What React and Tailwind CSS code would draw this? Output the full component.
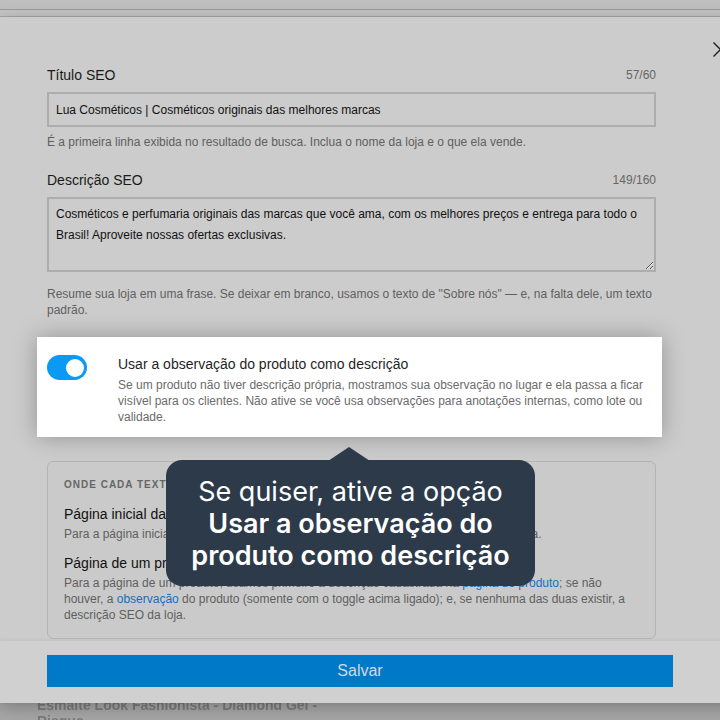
import { X } from 'lucide-react';

const sans = { fontFamily: '"Liberation Sans", Arial, sans-serif' };

function Field({ label, count, children, hint }) {
  return (
    <div>
      <div className="flex h-5 items-center justify-between">
        <span className="text-[14px] text-[#1a1a1a]">{label}</span>
        <span className="text-[12px] text-[#666]">{count}</span>
      </div>
      {children}
      {hint}
    </div>
  );
}

function Toggle() {
  return (
    <div className="mt-px flex h-[25px] w-10 shrink-0 items-center justify-end rounded-full bg-[#0b9af3] pr-[3px]">
      <span className="size-[18px] rounded-full bg-white" />
    </div>
  );
}

export default function App() {
  return (
    <div className="relative h-[720px] w-[720px] overflow-hidden bg-[#a6a6a6]" style={sans}>
      {/* store page behind the dialog */}
      <div className="h-[10px] border-b border-[#999] bg-[#bfbfbf]" />
      <div className="h-[6px] bg-[#c4c4c4]" />
      <div className="pl-[37px] pt-[681px] text-[14px] font-bold leading-4 text-[#7a7a7a] blur-[0.6px]">
        <p>Esmalte Look Fashionista - Diamond Gel -</p>
        <p>Risque</p>
      </div>

      {/* SEO dialog */}
      <div className="absolute left-0 top-[17px] flex h-[686px] w-[760px] flex-col bg-[#cccccc] shadow-[0_4px_16px_rgba(0,0,0,0.25)]">
        <button className="absolute left-[713px] top-[25px] text-[#1e1e1e]">
          <svg width="15" height="15" viewBox="0 0 15 15" fill="none" stroke="currentColor" strokeWidth="1.4">
            <path d="M0.5 0.5l14 14M14.5 0.5l-14 14" />
          </svg>
        </button>

        <div className="relative h-[624px] pl-[47px] pt-[48px]">
          <div className="w-[609px]">
            <Field
              label="Título SEO"
              count="57/60"
              hint={
                <p className="mt-[7px] text-[12px] leading-4 text-[#5f5f5f]">
                  É a primeira linha exibida no resultado de busca. Inclua o nome da loja e o que ela vende.
                </p>
              }
            >
              <div className="mt-[7px] flex h-[35px] items-center border-2 border-[#adadad] px-[7px] text-[12px] text-[#111]">
                Lua Cosméticos | Cosméticos originais das melhores marcas
              </div>
            </Field>

            <div className="mt-5">
              <Field
                label="Descrição SEO"
                count="149/160"
                hint={
                  <p className="mt-[14px] text-[12px] leading-4 text-[#5f5f5f]">
                    Resume sua loja em uma frase. Se deixar em branco, usamos o texto de "Sobre nós" — e, na falta
                    dele, um texto padrão.
                  </p>
                }
              >
                <textarea
                  readOnly
                  className="mt-[7px] block h-[75px] w-full border-2 border-[#adadad] bg-transparent px-[7px] pt-[5px] text-[12px] leading-[21px] text-[#111] outline-none"
                  defaultValue="Cosméticos e perfumaria originais das marcas que você ama, com os melhores preços e entrega para todo o Brasil! Aproveite nossas ofertas exclusivas."
                />
              </Field>
            </div>
          </div>

          {/* highlighted option */}
          <div className="relative z-10 -ml-[10px] mt-[19px] flex h-[100px] w-[625px] gap-[31px] bg-white pl-[10px] pr-[14px] pt-[17px] shadow-[0_0_22px_rgba(0,0,0,0.28)]">
            <Toggle />
            <div>
              <p className="text-[14px] leading-5 text-[#1f1f1f]">Usar a observação do produto como descrição</p>
              <p className="mt-[3px] text-[12px] leading-4 text-[#6b6b6b]">
                Se um produto não tiver descrição própria, mostramos sua observação no lugar e ela passa a ficar
                visível para os clientes. Não ative se você usa observações para anotações internas, como lote ou
                validade.
              </p>
            </div>
          </div>

          {/* where each text appears */}
          <div className="mt-6 h-[178px] w-[609px] rounded-md border border-[#b4b4b4] bg-[#cacaca] px-4 pt-4">
            <p className="text-[10px] font-bold uppercase leading-[14px] tracking-[1px] text-[#666]">
              Onde cada texto aparece
            </p>
            <p className="mt-3 text-[14px] leading-5 text-[#111]">Página inicial da loja</p>
            <p className="mt-[2px] text-[12px] leading-4 text-[#5f5f5f]">
              Para a página inicial, usamos a Descrição SEO acima ou, se vazia, o texto da plataforma.
            </p>
            <p className="mt-[11px] text-[14px] leading-5 text-[#111]">Página de um produto</p>
            <p className="mt-[2px] text-[12px] leading-4 text-[#5f5f5f]">
              Para a página de um produto, usamos primeiro a descrição cadastrada na{' '}
              <span className="text-[#1170c0]">página do produto</span>; se não houver, a{' '}
              <span className="text-[#1170c0]">observação</span> do produto (somente com o toggle acima ligado); e, se
              nenhuma das duas existir, a descrição SEO da loja.
            </p>
          </div>

          {/* coach mark */}
          <div
            className="absolute left-[166px] top-[443px] z-20 w-[369px] rounded-2xl bg-[#2d3a4a] pb-[14px] pt-4 text-center text-[27px] leading-8 text-white"
            style={{ fontFamily: 'Inter, "Noto Sans", sans-serif' }}
          >
            <svg className="absolute -top-[13px] left-[162px]" width="42" height="14" viewBox="0 0 42 14">
              <path d="M0 14 L21 0 L42 14 Z" fill="#2d3a4a" />
            </svg>
            <p>Se quiser, ative a opção</p>
            <p className="font-semibold">
              Usar a observação do
              <br />
              produto como descrição
            </p>
          </div>
        </div>

        <div className="h-[62px] bg-[#d0d0d0] pl-[47px] pt-[14px] shadow-[0_-1px_4px_rgba(0,0,0,0.06)]">
          <button className="h-8 w-[626px] bg-[#0079c9] text-[16px] text-[#cfdbe6]">Salvar</button>
        </div>
      </div>
    </div>
  );
}
